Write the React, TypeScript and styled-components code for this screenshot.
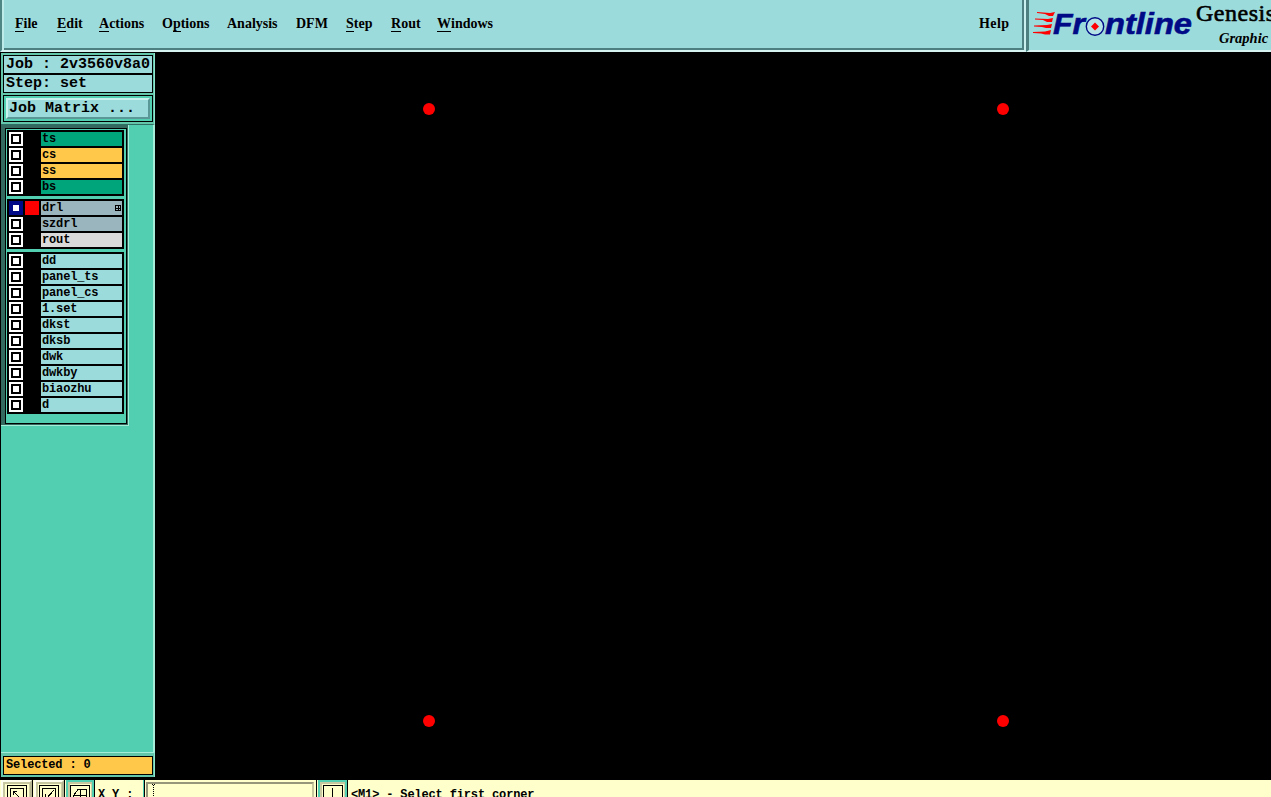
import React from "react";
import styled, { createGlobalStyle } from "styled-components";

const AQUA = "#9cdbdc";
const GREEN = "#52ceb0";
const CREAM = "#ffffcc";

const Global = createGlobalStyle`
  *, *::before, *::after { box-sizing: border-box; }
  body { margin: 0; background: #000; overflow: hidden; }
`;

const Screen = styled.div`
  display: grid;
  grid-template-rows: 52px 728px 17px;
  width: 1271px;
  height: 797px;
  overflow: hidden;
  background: #000;
  color: #000;
`;

const TopBar = styled.header`
  display: flex;
  overflow: hidden;
  background: ${AQUA};
`;

const MenuBar = styled.nav`
  display: flex;
  flex: none;
  width: 1026px;
  height: 52px;
  padding: 14px 0 0 11px;
  border-left: 2px solid #4d8585;
  border-right: 2px solid #c9f0ee;
  border-bottom: 2px solid #d6f3f2;
  box-shadow: inset 2px 0 #bdebea, inset -2px -2px #4d8080;
  font: bold 14px/20px "Liberation Serif", serif;
`;

const MenuItem = styled.span<{ $w: number; $help?: boolean }>`
  flex: none;
  width: ${(p) => p.$w}px;
  margin-left: ${(p) => (p.$help ? "auto" : "2px")};
  margin-right: ${(p) => (p.$help ? "14px" : "15px")};
  letter-spacing: ${(p) => (p.$help ? "0.4px" : "0")};
  white-space: nowrap;
`;

const Key = styled.span`
  display: inline-block;
  height: 18px;
  border-bottom: 1px solid #000;
  line-height: 20px;
`;

const Brand = styled.div`
  display: flex;
  flex: none;
  width: 300px;
  height: 52px;
  padding-left: 4px;
  border-left: 3px solid #4d8080;
  border-bottom: 2px solid #d6f3f2;
`;

const Product = styled.div`
  flex: none;
  padding-left: 2px;
  white-space: nowrap;
`;

const ProductName = styled.div`
  height: 29px;
  font: 24px/26px "Liberation Serif", serif;
  letter-spacing: 0.5px;
  -webkit-text-stroke: 0.6px #000;
`;

const ProductKind = styled.div`
  padding-left: 23px;
  font: italic bold 14.5px/18px "Liberation Serif", serif;
`;

const Work = styled.div`
  display: flex;
  background: #000;
`;

const Sidebar = styled.aside`
  display: flex;
  flex-direction: column;
  width: 155px;
  height: 725px;
  border-left: 1px solid #000;
  border-top: 1px solid #000;
  background: ${GREEN};
`;

const JobPanel = styled.section`
  flex: none;
  height: 71px;
  padding: 2px 1px 0 2px;
  border-right: 1px solid #8de3cc;
  background: #63c5aa;
`;

const JobLine = styled.div`
  height: 19px;
  padding-left: 2px;
  border: 1px solid #000;
  background: ${AQUA};
  font: bold 15px/18px "Liberation Mono", monospace;
  white-space: pre;
`;

const MatrixFrame = styled.div`
  height: 27px;
  margin-top: 2px;
  padding: 2px;
  border: 1px solid #000;
  background: ${GREEN};
`;

const MatrixButton = styled.button`
  display: block;
  width: 100%;
  height: 21px;
  padding: 0 0 0 1px;
  border: 2px solid;
  border-color: #c8f2ed #5a9797 #5a9797 #c8f2ed;
  background: ${AQUA};
  color: #000;
  font: bold 15px/16px "Liberation Mono", monospace;
  text-align: left;
`;

const LayerArea = styled.section`
  flex: 1;
  border-top: 1px solid #2f6f63;
  border-right: 2px solid #a5ecd9;
  background: ${GREEN};
`;

const LayerWell = styled.div`
  width: 128px;
  height: 301px;
  padding: 3px 1px 1px 4px;
  border-right: 1px solid #a5ecd9;
  border-bottom: 1px solid #a5ecd9;
  background: #33695e;
`;

const LayerFrame = styled.div`
  display: flex;
  flex-direction: column;
  gap: 3px;
  height: 296px;
  padding: 1px;
  border: 1px solid #000;
  background: ${GREEN};
`;

const LayerGroup = styled.div`
  width: 117px;
  padding-top: 2px;
  background: #000;
`;

const LayerRow = styled.div`
  display: flex;
  height: 16px;
  padding-left: 2px;
`;

const Check = styled.span<{ $on?: boolean }>`
  width: 14px;
  height: 14px;
  padding: 2px;
  background: ${(p) => (p.$on ? "#000a86" : "#fff")};

  &::before {
    content: "";
    display: block;
    width: 10px;
    height: 10px;
    border: 2px solid ${(p) => (p.$on ? "#000a86" : "#000")};
    background: #fff;
  }
`;

const Swatch = styled.span<{ $on?: boolean }>`
  width: 14px;
  height: 14px;
  margin: 0 2px;
  background: ${(p) => (p.$on ? "#f00" : "#000")};
`;

const LayerName = styled.span<{ $color: string }>`
  display: flex;
  align-items: center;
  justify-content: space-between;
  width: 81px;
  height: 14px;
  padding-left: 1px;
  background: ${(p) => p.$color};
  font: bold 12px/14px "Liberation Mono", monospace;
  letter-spacing: -0.15px;
`;

const Selected = styled.footer`
  flex: none;
  height: 25px;
  padding: 3px 1px 2px 2px;
  border-top: 1px solid #a5ecd9;
  border-right: 1px solid #8de3cc;
  background: #63c5aa;
`;

const SelectedBox = styled.div`
  height: 19px;
  padding-left: 2px;
  border: 1px solid #000;
  background: #ffc84b;
  font: bold 12px/17px "Liberation Mono", monospace;
  letter-spacing: -0.15px;
  white-space: pre;
`;

const Canvas = styled.main`
  position: relative;
  flex: 1;
  background: #000;
`;

const Pad = styled.i<{ $x: number; $y: number }>`
  position: absolute;
  left: ${(p) => p.$x}px;
  top: ${(p) => p.$y}px;
  width: 12px;
  height: 12px;
  border-radius: 50%;
  background: #f00;
`;

const StatusBar = styled.footer`
  display: flex;
  height: 17px;
  overflow: hidden;
  background: ${CREAM};
  font: bold 12px/14px "Liberation Mono", monospace;
  letter-spacing: -0.15px;
`;

const Tool = styled.span<{ $w: number; $active?: boolean; $gap?: number }>`
  display: flex;
  flex: none;
  justify-content: center;
  width: ${(p) => p.$w}px;
  height: 30px;
  margin-left: ${(p) => p.$gap ?? 0}px;
  margin-right: 2px;
  padding-top: 3px;
  border: 2px solid;
  border-color: ${(p) => (p.$active ? GREEN : "#fffff0 #b5b592 #b5b592 #fffff0")};
  box-shadow: inset 2px 2px #c8c8a0, inset -1px 0 #cfcfa7, 1px 0 #000;
`;

const Coord = styled.span`
  width: 48px;
  height: 17px;
  padding: 8px 0 0 2px;
  border-right: 1px solid ${GREEN};
  box-shadow: 1px 0 #000;
  white-space: pre;
`;

const CoordField = styled.span`
  width: 168px;
  height: 30px;
  margin: 2px 2px 0;
  padding-left: 4px;
  border: 2px solid #96967b;
  border-right-color: #c8c89f;

  &::before {
    content: "";
    display: block;
    width: 3px;
    height: 14px;
    border-top: 1px dotted #000;
    background: repeating-linear-gradient(#000 0 1px, transparent 1px 2px) 1px 0 / 1px 100% no-repeat;
  }
`;

const Divider = styled.span`
  width: 1px;
  background: #000;
`;

const Hint = styled.span`
  padding: 8px 0 0 2px;
  white-space: pre;
`;

type Layer = { name: string; color: string; on?: boolean };

const groups: Layer[][] = [
  [
    { name: "ts", color: "#00a57c" },
    { name: "cs", color: "#ffc84b" },
    { name: "ss", color: "#ffc84b" },
    { name: "bs", color: "#00a57c" },
  ],
  [
    { name: "drl", color: "#9bb5be", on: true },
    { name: "szdrl", color: "#9bb5be" },
    { name: "rout", color: "#dadada" },
  ],
  ["dd", "panel_ts", "panel_cs", "1.set", "dkst", "dksb", "dwk", "dwkby", "biaozhu", "d"].map(
    (name) => ({ name, color: AQUA })
  ),
];

const menus = [
  { key: "F", rest: "ile", w: 25 },
  { key: "E", rest: "dit", w: 25 },
  { key: "A", rest: "ctions", w: 46 },
  { pre: "O", key: "p", rest: "tions", w: 48 },
  { rest: "Analysis", w: 52 },
  { rest: "DFM", w: 33 },
  { key: "S", rest: "tep", w: 28 },
  { key: "R", rest: "out", w: 29 },
  { key: "W", rest: "indows", w: 56 },
];

const LogoSvg = styled.svg`
  flex: none;
`;

const Logo = () => (
  <LogoSvg width="161" height="50" viewBox="1033 0 161 50">
    <g fill="#f00">
      <path d="M1037 12L1050 13L1055 12L1053 16H1049L1045 14L1037 13Z" />
      <path d="M1035 18.5L1048 19L1053 18L1052 22H1047L1043 20L1035 19.5Z" />
      <path d="M1034 25.5L1047 25L1052 24L1051 28H1046L1042 27L1034 26.5Z" />
      <path d="M1033 32L1045 31.500L1051 30L1050 34.500H1045L1041 33.500L1033 33Z" />
    </g>
    <g fill="#000a86" stroke="#000a86" strokeWidth="0.6" fontFamily="Liberation Sans, sans-serif" fontWeight="bold" fontStyle="italic" fontSize="30">
      <text x="1053" y="34" textLength="32" lengthAdjust="spacingAndGlyphs">Fr</text>
      <text x="1105" y="34" textLength="87" lengthAdjust="spacingAndGlyphs">ntline</text>
    </g>
    <circle cx="1095" cy="26.5" r="8.700" fill="#b5e4e6" stroke="#000a86" strokeWidth="1.4" />
    <path d="M1095 22.500L1099 26.500L1095 30.500L1091 26.500Z" fill="#f00" />
  </LogoSvg>
);

const GridMark = () => (
  <svg width="7" height="7" viewBox="0 0 7 7" shapeRendering="crispEdges">
    <path d="M.5 .5H5.5V5.5H.5ZM3 0V6M0 3H6" fill="none" stroke="#000" />
  </svg>
);

const ToolIcon = ({ d, framed }: { d: string; framed?: boolean }) => (
  <svg width="20" height="22" viewBox="0 0 20 22" fill="none" stroke="#000" shapeRendering="crispEdges">
    <path d="M.5 .5H19.5V21.5H.5Z" />
    {framed && <path d="M3.5 22V3.5H16.5V22" />}
    <path d={d} />
  </svg>
);

export default function App() {
  return (
    <>
      <Global />
      <Screen>
        <TopBar>
          <MenuBar>
            {menus.map((m) => (
              <MenuItem key={m.rest} $w={m.w}>
                {m.pre}
                {m.key && <Key>{m.key}</Key>}
                {m.rest}
              </MenuItem>
            ))}
            <MenuItem $w={31} $help>Help</MenuItem>
          </MenuBar>
          <Brand>
            <Logo />
            <Product>
              <ProductName>Genesis</ProductName>
              <ProductKind>Graphic</ProductKind>
            </Product>
          </Brand>
        </TopBar>
        <Work>
          <Sidebar>
            <JobPanel>
              <JobLine>Job : 2v3560v8a0</JobLine>
              <JobLine>Step: set</JobLine>
              <MatrixFrame>
                <MatrixButton>Job Matrix ...</MatrixButton>
              </MatrixFrame>
            </JobPanel>
            <LayerArea>
              <LayerWell>
                <LayerFrame>
                  {groups.map((group, i) => (
                    <LayerGroup key={i}>
                      {group.map((l) => (
                        <LayerRow key={l.name}>
                          <Check $on={l.on} />
                          <Swatch $on={l.on} />
                          <LayerName $color={l.color}>
                            {l.name}
                            {l.on && <GridMark />}
                          </LayerName>
                        </LayerRow>
                      ))}
                    </LayerGroup>
                  ))}
                </LayerFrame>
              </LayerWell>
            </LayerArea>
            <Selected>
              <SelectedBox>Selected : 0</SelectedBox>
            </Selected>
          </Sidebar>
          <Canvas>
            <Pad $x={268} $y={51} />
            <Pad $x={842} $y={51} />
            <Pad $x={268} $y={663} />
            <Pad $x={842} $y={663} />
          </Canvas>
        </Work>
        <StatusBar>
          <Tool $w={31} $gap={1}><ToolIcon framed d="M6.500 10V6.500H10M6.500 6.500L16 16" /></Tool>
          <Tool $w={30}><ToolIcon framed d="M15 5L8 13M6.500 9V13.500H11" /></Tool>
          <Tool $w={28} $active><ToolIcon d="M3.500 10.500L8 4.500H16.500V16.500H3.500ZM3 10.500H17M10.500 4V17" /></Tool>
          <Coord>X Y :</Coord>
          <CoordField />
          <Divider />
          <Tool $w={29} $gap={1} $active><ToolIcon d="M9.5 3V18" /></Tool>
          <Hint>{"<M1> - Select first corner"}</Hint>
        </StatusBar>
      </Screen>
    </>
  );
}
